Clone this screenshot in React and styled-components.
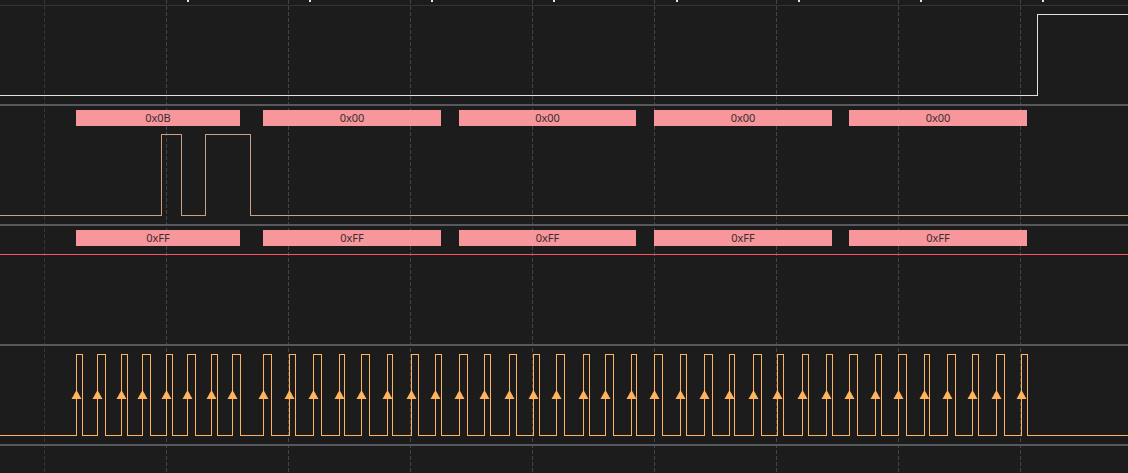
import styled, { createGlobalStyle } from "styled-components";

const W = 1128;

const GlobalStyle = createGlobalStyle`
  html, body {
    margin: 0;
    padding: 0;
    background: #1c1c1c;
    overflow: hidden;
  }
`;

const Viewport = styled.div`
  position: relative;
  width: ${W}px;
  height: 473px;
  background: #1c1c1c;
  font-family: "Noto Sans", "Open Sans", sans-serif;
`;

const Ruler = styled.div`
  position: relative;
  z-index: 1;
  height: 5px;
  border-bottom: 1px solid #343436;
`;

const Tick = styled.span`
  position: absolute;
  top: 0;
  width: 2px;
  height: 2px;
  background: #e4e4e4;
`;

const Channel = styled.div`
  position: relative;
  z-index: 1;
  height: ${(p) => (p.$decoded ? 114 : 98)}px;
  padding-top: ${(p) => (p.$decoded ? 4 : 0)}px;
  border-bottom: 2px solid #58585c;
`;

const Wave = styled.svg`
  position: absolute;
  left: 0;
  top: 0;
  display: block;
`;

const LabelRow = styled.div`
  position: relative;
  height: 16px;
`;

const Label = styled.div`
  position: absolute;
  top: 0;
  height: 16px;
  background: #f7979b;
  color: #3b2c30;
  font-size: 11px;
  line-height: 16px;
  text-align: center;
`;

const GridOverlay = styled.svg`
  position: absolute;
  left: 0;
  top: 0;
  pointer-events: none;
  z-index: 0;
`;

const gridXs = [44, 166, 288, 410, 532, 654, 776, 898, 1020];
const tickXs = [187, 309, 431, 553, 676, 798, 920, 1042];

const bytes = [
  { from: 76, to: 240, mosi: "0x0B", miso: "0xFF" },
  { from: 263, to: 441, mosi: "0x00", miso: "0xFF" },
  { from: 459, to: 636, mosi: "0x00", miso: "0xFF" },
  { from: 654, to: 832, mosi: "0x00", miso: "0xFF" },
  { from: 849, to: 1027, mosi: "0x00", miso: "0xFF" },
];

// rising / falling edges of the clock, sample positions
const clockEdges = [
  [76, 82], [97, 105], [121, 127], [142, 150], [166, 172], [187, 195], [211, 217], [232, 240],
  [263, 271], [289, 295], [313, 321], [339, 344], [361, 369], [387, 392], [411, 418], [435, 441],
  [459, 467], [484, 490], [509, 516], [533, 539], [556, 564], [583, 589], [605, 613], [631, 636],
  [654, 662], [680, 686], [704, 712], [729, 734], [753, 761], [777, 783], [802, 808], [826, 832],
  [849, 857], [875, 881], [898, 906], [924, 929], [947, 955], [972, 978], [996, 1004], [1021, 1027],
];

function pulsePath(edges, hi, lo) {
  const h = hi + 0.5;
  const l = lo + 0.5;
  let d = `M0 ${l}`;
  edges.forEach(([r, f]) => {
    d += ` H${r + 0.5} V${h} H${f + 0.5} V${l}`;
  });
  return d + ` H${W}`;
}

function Trace({ height, d, color }) {
  return (
    <Wave width={W} height={height} shapeRendering="crispEdges">
      <path d={d} fill="none" stroke={color} strokeWidth="1" />
    </Wave>
  );
}

function Decoded({ field }) {
  return (
    <LabelRow>
      {bytes.map((b, i) => (
        <Label key={i} style={{ left: b.from, width: b.to - b.from }}>
          {b[field]}
        </Label>
      ))}
    </LabelRow>
  );
}

export default function App() {
  const csPath = `M0 89.5 H1037.5 V8.5 H${W}`;
  const mosiPath = pulsePath([[161, 181], [205, 250]], 28, 109);
  const clkPath = pulsePath(clockEdges, 8, 89);

  return (
    <>
      <GlobalStyle />
      <Viewport>
        <GridOverlay width={W} height={473}>
          {gridXs.map((x, i) => (
            <line
              key={x}
              x1={x + 0.5}
              x2={x + 0.5}
              y1={0}
              y2={473}
              stroke={i === 0 ? "#343438" : "#46464a"}
              strokeWidth="1"
              strokeDasharray="4 2"
            />
          ))}
        </GridOverlay>

        <Ruler>
          {tickXs.map((x) => (
            <Tick key={x} style={{ left: x }} />
          ))}
        </Ruler>

        <Channel>
          <Trace height={98} d={csPath} color="#e2e2e2" />
        </Channel>

        <Channel $decoded>
          <Trace height={118} d={mosiPath} color="#c9a084" />
          <Decoded field="mosi" />
        </Channel>

        <Channel $decoded>
          <Trace height={118} d={`M0 28.5 H${W}`} color="#ff5468" />
          <Decoded field="miso" />
        </Channel>

        <Channel>
          <Wave width={W} height={98}>
            <path d={clkPath} fill="none" stroke="#ffb35e" strokeWidth="1" shapeRendering="crispEdges" />
            {clockEdges.map(([r]) => (
              <polygon
                key={r}
                points={`${r + 0.5},44 ${r + 5.5},53 ${r - 4.5},53`}
                fill="#ffb35e"
              />
            ))}
          </Wave>
        </Channel>
      </Viewport>
    </>
  );
}
